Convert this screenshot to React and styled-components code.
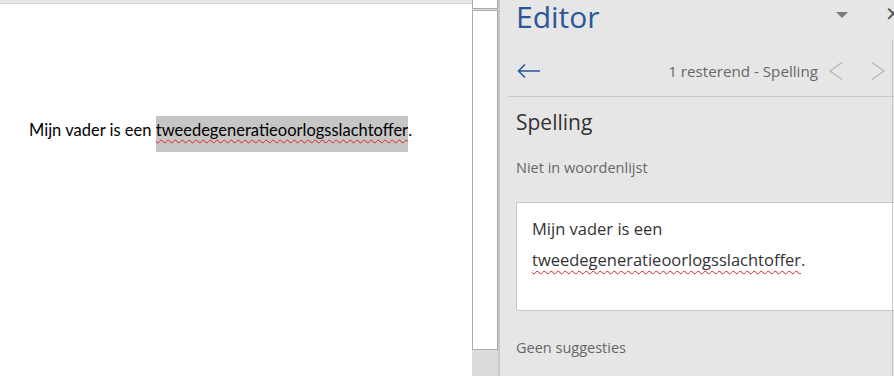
import React from "react";
import styled, { createGlobalStyle } from "styled-components";

const GlobalStyle = createGlobalStyle`
  html, body {
    margin: 0;
    padding: 0;
    background: #ffffff;
  }
  body {
    font-family: "Open Sans", "Noto Sans", sans-serif;
  }
`;

const Screen = styled.div`
  display: flex;
  width: 894px;
  height: 376px;
  overflow: hidden;
`;

const DocArea = styled.div`
  width: 472px;
  display: flex;
  flex-direction: column;
  background: #ffffff;
`;

const DocTopStrip = styled.div`
  height: 3px;
  background: #e6e6e6;
  border-bottom: 1px solid #d6d6d6;
`;

const DocBody = styled.div`
  padding: 112px 0 0 29px;
  font-family: Lato, "Liberation Sans", sans-serif;
  font-size: 16.5px;
  line-height: 29px;
  color: #000000;
`;

const Highlight = styled.span`
  display: inline-block;
  vertical-align: top;
  background: #c6c6c6;
  height: 36px;
`;

const Misspelled = styled.span`
  text-decoration: underline wavy #e02020;
  text-decoration-thickness: 1px;
  text-underline-offset: ${(p) => p.$offset || 3}px;
`;

const ScrollColumn = styled.div`
  width: 26px;
  display: flex;
  flex-direction: column;
  background: #dcdcdc;
`;

const ScrollCap = styled.div`
  height: 8px;
  background: #ffffff;
  border: 1px solid #ababab;
  border-top: none;
`;

const ScrollTrack = styled.div`
  margin-top: 1px;
  height: 338px;
  background: #ffffff;
  border: 1px solid #ababab;
`;

const Pane = styled.div`
  flex: 1;
  position: relative;
  background: #e6e6e6;
  border-left: 2px solid #c8c8c8;
  overflow: hidden;
  display: flex;
  flex-direction: column;
`;

const PaneEdge = styled.div`
  position: absolute;
  right: 1px;
  top: 40px;
  bottom: 0;
  width: 1px;
  background: #c8c8c8;
`;

const HeaderRow = styled.div`
  display: flex;
  align-items: center;
  height: 34px;
  padding-left: 16px;
`;

const Title = styled.div`
  font-size: 30px;
  line-height: 34px;
  color: #2b579a;
  flex: 1;
`;

const Caret = styled.svg`
  margin-right: 46px;
  margin-top: -4px;
`;

const CloseMark = styled.div`
  position: absolute;
  right: -8px;
  top: 2px;
  font-size: 20px;
  line-height: 24px;
  color: #555555;
`;

const NavRow = styled.div`
  display: flex;
  align-items: center;
  box-sizing: border-box;
  height: 63px;
  margin-left: 8px;
  padding: 12px 9px 0 9px;
  border-bottom: 1px solid #c8c8c8;
`;

const BackButton = styled.svg`
  flex: none;
`;

const Remaining = styled.div`
  margin-left: auto;
  font-size: 15.2px;
  color: #666666;
`;

const Chevron = styled.svg`
  flex: none;
  margin-left: ${(p) => p.$gap}px;
`;

const Section = styled.div`
  padding-left: 16px;
`;

const Heading = styled.div`
  font-size: 21px;
  color: #333333;
  margin-top: 10px;
  line-height: 30px;
`;

const Label = styled.div`
  font-size: 14.5px;
  color: #666666;
  line-height: 20px;
  margin-top: ${(p) => p.$top}px;
`;

const SentenceBox = styled.div`
  margin-top: ${(p) => p.$top}px;
  width: 420px;
  height: 109px;
  box-sizing: border-box;
  background: #ffffff;
  border: 1px solid #c8c8c8;
  padding: 10px 0 0 15px;
  font-size: 16.5px;
  line-height: 31px;
  color: #333333;
`;

export default function App() {
  return (
    <>
      <GlobalStyle />
      <Screen>
        <DocArea>
          <DocTopStrip />
          <DocBody>
            Mijn vader is een{" "}
            <Highlight>
              <Misspelled $offset={3}>tweedegeneratieoorlogsslachtoffer</Misspelled>
            </Highlight>
            .
          </DocBody>
        </DocArea>

        <ScrollColumn>
          <ScrollCap />
          <ScrollTrack />
        </ScrollColumn>

        <Pane>
          <PaneEdge />
          <HeaderRow>
            <Title>Editor</Title>
            <Caret width="12" height="6" viewBox="0 0 12 6">
              <path d="M0 0 H12 L6 6 Z" fill="#7a7a7a" />
            </Caret>
          </HeaderRow>
          <CloseMark>✕</CloseMark>

          <NavRow>
            <BackButton width="24" height="14" viewBox="0 0 24 14">
              <path
                d="M1 7 H23 M8 0.5 L1.5 7 L8 13.5"
                fill="none"
                stroke="#2b579a"
                strokeWidth="1.5"
              />
            </BackButton>
            <Remaining>1 resterend - Spelling</Remaining>
            <Chevron $gap={11} width="14" height="18" viewBox="0 0 14 18">
              <path d="M13 0.5 L1 9 L13 17.5" fill="none" stroke="#b4b4b4" strokeWidth="1.3" />
            </Chevron>
            <Chevron $gap={28} width="14" height="18" viewBox="0 0 14 18">
              <path d="M1 0.5 L13 9 L1 17.5" fill="none" stroke="#b4b4b4" strokeWidth="1.3" />
            </Chevron>
          </NavRow>

          <Section>
            <Heading>Spelling</Heading>
            <Label $top={21}>Niet in woordenlijst</Label>
            <SentenceBox $top={24}>
              Mijn vader is een
              <br />
              <Misspelled $offset={4}>tweedegeneratieoorlogsslachtoffer</Misspelled>.
            </SentenceBox>
            <Label $top={27}>Geen suggesties</Label>
          </Section>
        </Pane>
      </Screen>
    </>
  );
}
